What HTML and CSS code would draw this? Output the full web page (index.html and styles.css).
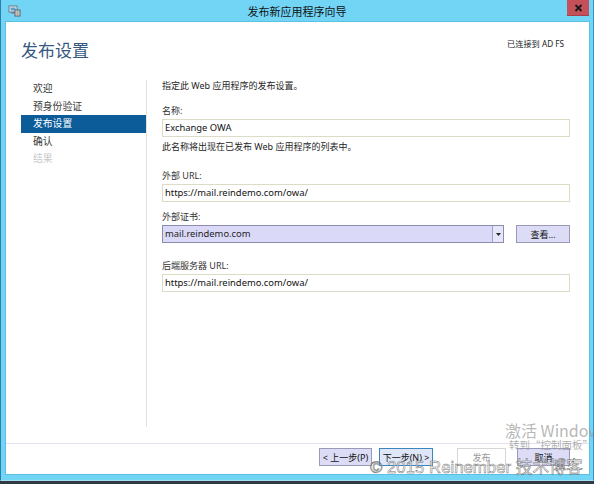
FILE: index.html
```html
<!DOCTYPE html>
<html lang="zh-CN">
<head>
<meta charset="utf-8">
<title>发布新应用程序向导</title>
<link rel="stylesheet" href="styles.css">
</head>
<body>
<div class="window">
  <div class="titlebar">
    <div class="tb-left">
      <svg class="app-icon" width="13" height="12" viewBox="0 0 13 12">
        <rect x="1" y="1" width="8" height="6" fill="#e8eef2" stroke="#6a7a88" stroke-width="1"/>
        <rect x="2.5" y="2.5" width="5" height="3" fill="#5aa0d0"/>
        <rect x="3" y="7" width="4" height="1.5" fill="#6a7a88"/>
        <rect x="7" y="5" width="5" height="6" fill="#d8dde2" stroke="#56626e" stroke-width="1"/>
        <rect x="8.5" y="6.5" width="2" height="1" fill="#3d9a4a"/>
        <rect x="8.5" y="8.5" width="2" height="1" fill="#c05a30"/>
      </svg>
    </div>
    <div class="tb-title">发布新应用程序向导</div>
    <div class="tb-right">
      <div class="close-btn">
        <svg width="9" height="8" viewBox="0 0 9 8"><path d="M1.5 1 L7.5 7 M7.5 1 L1.5 7" stroke="#1a1a1a" stroke-width="1.9"/></svg>
      </div>
    </div>
  </div>
  <div class="client">
    <div class="header">
      <h1 class="page-title">发布设置</h1>
      <div class="connected">已连接到 AD FS</div>
    </div>
    <div class="main">
      <nav class="nav">
        <div class="nav-item">欢迎</div>
        <div class="nav-item">预身份验证</div>
        <div class="nav-item active">发布设置</div>
        <div class="nav-item">确认</div>
        <div class="nav-item disabled">结果</div>
      </nav>
      <div class="content">
        <div class="txt intro">指定此 Web 应用程序的发布设置。</div>
        <div class="txt lbl-name">名称:</div>
        <div class="field f-name">Exchange OWA</div>
        <div class="txt hint">此名称将出现在已发布 Web 应用程序的列表中。</div>
        <div class="txt lbl-ext">外部 URL:</div>
        <div class="field f-ext">https://mail.reindemo.com/owa/</div>
        <div class="txt lbl-cert">外部证书:</div>
        <div class="cert-row">
          <div class="select">
            <span class="select-val">mail.reindemo.com</span>
            <span class="select-arrow"><svg width="5" height="3" viewBox="0 0 5 3"><path d="M0 0 H5 L2.5 3 Z" fill="#222"/></svg></span>
          </div>
          <div class="btn view-btn">查看...</div>
        </div>
        <div class="txt lbl-back">后端服务器 URL:</div>
        <div class="field f-back">https://mail.reindemo.com/owa/</div>
      </div>
    </div>
    <div class="footer">
      <div class="btn fbtn b-prev">&lt; 上一步(P)</div>
      <div class="btn fbtn b-next">下一步(N) &gt;</div>
      <div class="btn fbtn b-pub">发布</div>
      <div class="btn fbtn b-cancel">取消</div>
    </div>
  </div>
  <div class="wm-activate">激活 Windows</div>
  <div class="wm-goto">转到“控制面板”以激活 Windows。</div>
  <div class="wm-copy">© 2015 Reinember 技术博客</div>
</div>
</body>
</html>
```

FILE: styles.css
```css
html, body {
  margin: 0;
  padding: 0;
}
body {
  width: 594px;
  height: 484px;
  background: #2f3a42;
  overflow: hidden;
  font-family: "Noto Sans", "Noto Sans CJK SC", sans-serif;
  font-size: 9px;
  color: #1e1e1e;
}
.window {
  position: relative;
  width: 594px;
  height: 481px;
  box-sizing: border-box;
  background: #72d5f6;
  border-left: 1px solid #2b7fb0;
  border-right: 1px solid #3a8fc0;
  border-bottom: 1px solid #a5dff3;
  display: flex;
  flex-direction: column;
  overflow: hidden;
}
.titlebar {
  height: 22px;
  display: grid;
  grid-template-columns: 1fr auto 1fr;
  align-items: start;
  flex: none;
}
.tb-left {
  padding: 5px 0 0 7px;
  height: 22px;
  box-sizing: border-box;
}
.app-icon { display: block; }
.tb-title {
  font-size: 11px;
  line-height: 22px;
  color: #111;
  font-family: "Noto Sans CJK SC", sans-serif;
}
.tb-right {
  display: flex;
  justify-content: flex-end;
  padding-right: 4px;
}
.close-btn {
  width: 22px;
  height: 16px;
  background: #c4505a;
  display: flex;
  align-items: center;
  justify-content: center;
  box-shadow: inset 0 -1px 0 #a8404a;
}
.client {
  flex: 1;
  margin: 0 4px 6px 5px;
  background: #fff;
  display: flex;
  flex-direction: column;
  box-shadow: 0 0 0 1px #5cbfe4;
}
.header {
  height: 58px;
  flex: none;
  display: flex;
  justify-content: space-between;
  align-items: flex-start;
  padding: 0 25px 0 15px;
}
.page-title {
  margin: 17px 0 0 0;
  font-size: 17px;
  line-height: 22px;
  font-weight: normal;
  color: #35597f;
  font-family: "Noto Sans CJK SC", sans-serif;
}
.connected {
  margin-top: 17px;
  font-size: 8.2px;
  line-height: 10px;
  color: #222;
}
.main {
  flex: 1;
  display: flex;
  align-items: flex-start;
}
.nav {
  width: 125px;
  margin-left: 15px;
  height: 347px;
  border-right: 1px solid #e4e1d8;
  flex: none;
  box-sizing: content-box;
}
.nav-item {
  height: 17.5px;
  line-height: 17.5px;
  padding-left: 12px;
  font-size: 9.8px;
  color: #3a3a3a;
  font-family: "Noto Sans CJK SC", sans-serif;
}
.nav-item.active {
  background: #0b5c99;
  color: #fff;
}
.nav-item.disabled { color: #c8c8c8; }
.content {
  flex: 1;
  display: flex;
  flex-direction: column;
  padding: 0 19px 0 15px;
}
.txt {
  line-height: 12px;
  height: 12px;
  white-space: nowrap;
}
.intro { margin-top: 0; }
.lbl-name { margin-top: 13px; color: #333; }
.field {
  box-sizing: border-box;
  height: 17.5px;
  line-height: 15.5px;
  border: 1px solid #dcdcc6;
  padding-left: 2px;
  font-size: 9.4px;
  color: #111;
  margin-top: 2px;
}
.f-ext { height: 18.5px; line-height: 16.5px; }
.hint { margin-top: 4px; }
.lbl-ext { margin-top: 17.3px; color: #333; }
.lbl-cert { margin-top: 8.7px; color: #333; }
.lbl-back { margin-top: 17.5px; color: #333; }
.cert-row {
  margin-top: 2.3px;
  display: flex;
  gap: 12px;
  height: 17.5px;
}
.select {
  flex: 1;
  box-sizing: border-box;
  border: 1px solid #8c8cae;
  background: #dadaf8;
  display: flex;
  align-items: stretch;
  font-size: 9.4px;
}
.select-val {
  flex: 1;
  padding-left: 2px;
  line-height: 15.5px;
}
.select-arrow {
  width: 10px;
  border-left: 1px solid #a4a4c0;
  background: #e6e6fa;
  display: flex;
  align-items: center;
  justify-content: center;
}
.btn {
  box-sizing: border-box;
  border: 1px solid #9a9ab8;
  background: #dcdcf6;
  display: flex;
  align-items: center;
  justify-content: center;
  font-size: 9px;
  color: #111;
  white-space: nowrap;
}
.view-btn { width: 54px; }
.footer {
  flex: none;
  height: 31px;
  box-sizing: border-box;
  border-top: 1px solid #e2e2f4;
  padding: 4px 19px 0 0;
  display: flex;
  justify-content: flex-end;
  align-items: flex-start;
}
.fbtn { height: 18px; }
.b-prev { width: 53px; }
.b-next {
  width: 54px;
  margin-left: 7px;
  border-color: #3c86c0;
  background: #dfe6f8;
}
.b-pub {
  width: 49px;
  margin-left: 24px;
  background: #fff;
  border-color: #d6d6d6;
  color: #9a9a9a;
}
.b-cancel {
  width: 53px;
  margin-left: 11px;
}
.wm-activate {
  position: absolute;
  left: 504px;
  top: 420px;
  font-size: 16px;
  line-height: 20px;
  color: rgba(160, 160, 160, 0.75);
  white-space: nowrap;
  font-family: "Noto Sans CJK SC", sans-serif;
}
.wm-goto {
  position: absolute;
  left: 508px;
  top: 439px;
  font-size: 10.5px;
  line-height: 12px;
  color: rgba(150, 150, 150, 0.75);
  white-space: nowrap;
  font-family: "Noto Sans CJK SC", sans-serif;
}
.wm-copy {
  position: absolute;
  left: 369px;
  top: 457px;
  font-size: 16.8px;
  line-height: 22px;
  color: rgba(255, 255, 255, 0.55);
  -webkit-text-stroke: 0.5px #707070;
  white-space: nowrap;
  font-family: "Liberation Sans", "Noto Sans CJK SC", sans-serif;
}
```
